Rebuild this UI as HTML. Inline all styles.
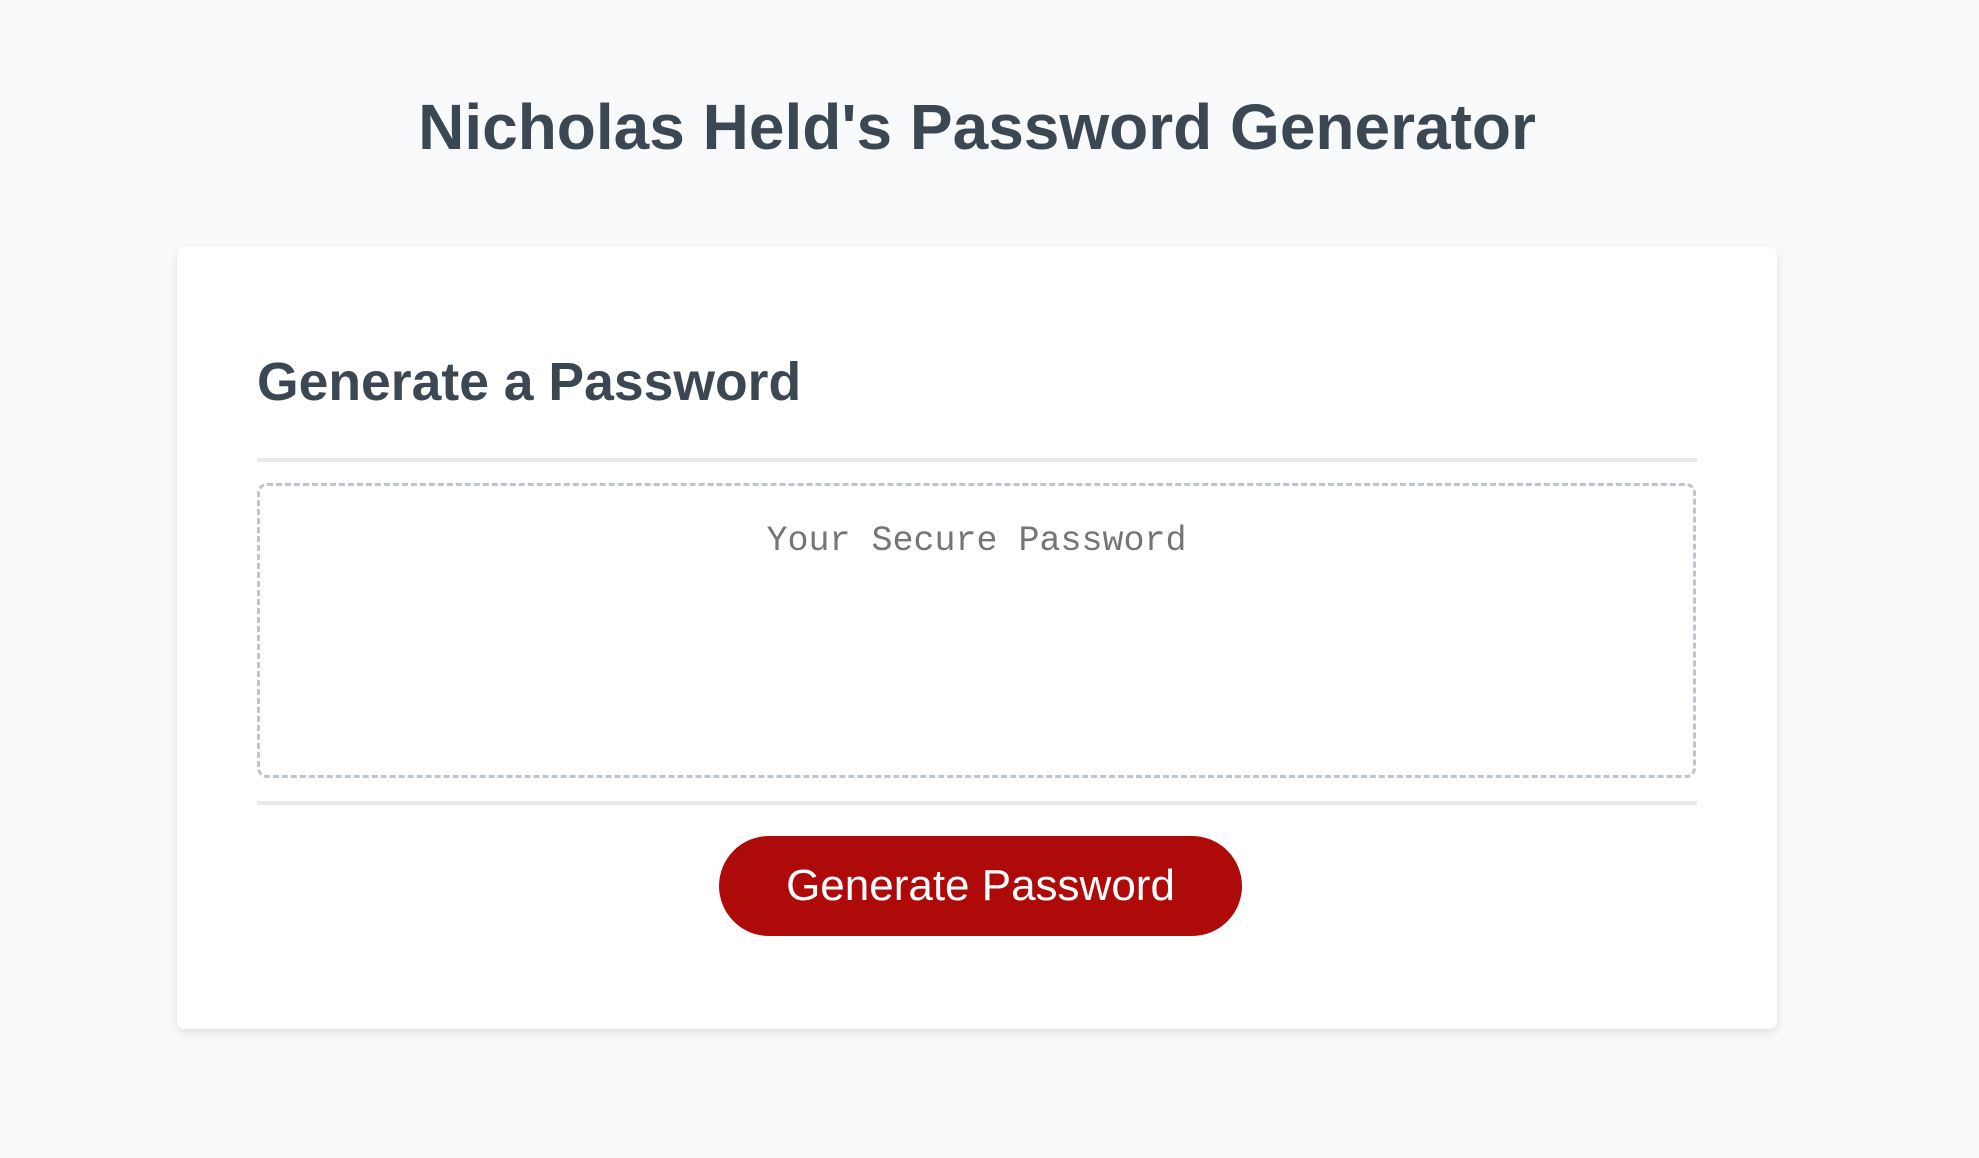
<!DOCTYPE html>
<html><head><style>
html,body{margin:0;padding:0}
body{width:1979px;height:1158px;background:#f9fafb;font-family:"Liberation Sans",Arial,sans-serif;position:relative;overflow:hidden}
h1{position:absolute;left:0;width:1954px;top:84px;margin:0;text-align:center;font-size:64px;font-weight:bold;color:#3b4854;line-height:86px}
.card{position:absolute;left:177px;top:247px;width:1600px;height:782px;background:#fff;border-radius:8px;box-shadow:0 4px 10px rgba(0,0,0,0.1)}
h2{position:absolute;left:80px;top:104px;margin:0;font-size:53.5px;font-weight:bold;color:#3b4854;line-height:64px}
.hr{position:absolute;left:80px;width:1440px;height:4px;background:#e8e8e8}
.box{position:absolute;left:80px;top:236px;width:1433px;height:289px;border:3px dashed #bfc5cc;border-radius:10px;text-align:center;font-family:"Liberation Mono",monospace;font-size:35px;color:#757575;line-height:42px;box-sizing:content-box}
.btn{position:absolute;left:542px;top:589px;width:523px;height:100px;background:#ae0a0a;border-radius:50px;color:#fff;font-size:44px;text-align:center;line-height:100px}
</style></head><body>
<h1>Nicholas Held's Password Generator</h1>
<div class="card">
<h2>Generate a Password</h2>
<div class="hr" style="top:211px"></div>
<div class="box"><div style="padding-top:34px">Your Secure Password</div></div>
<div class="hr" style="top:554px"></div>
<div class="btn">Generate Password</div>
</div>
</body></html>
